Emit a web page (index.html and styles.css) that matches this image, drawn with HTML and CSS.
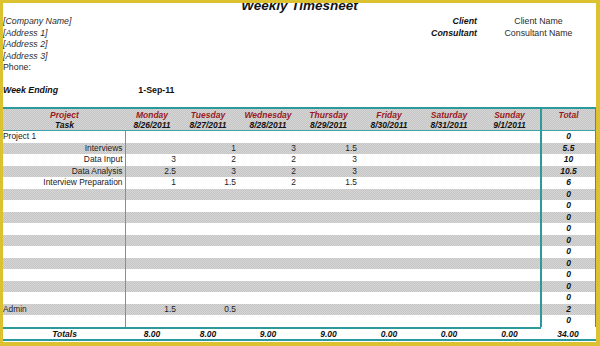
FILE: index.html
```html
<!DOCTYPE html>
<html>
<head>
<meta charset="utf-8">
<link rel="stylesheet" href="styles.css">
</head>
<body>
<div class="sheet">
  <div class="title">Weekly Timesheet</div>
  <div class="info">
    <div class="irow"><span class="c1 it">[Company Name]</span><span class="lbl">Client</span><span class="val">Client Name</span></div>
    <div class="irow"><span class="c1 it">[Address 1]</span><span class="lbl">Consultant</span><span class="val">Consultant Name</span></div>
    <div class="irow"><span class="c1 it">[Address 2]</span></div>
    <div class="irow"><span class="c1 it">[Address 3]</span></div>
    <div class="irow"><span class="c1">Phone:</span></div>
    <div class="irow"></div>
    <div class="irow"><span class="c1 bi">Week Ending</span><span class="wk">1-Sep-11</span></div>
    <div class="irow last"></div>
  </div>

  <div class="grid head">
    <div class="hc"><span class="red">Project</span><span>Task</span></div>
    <div class="hc"><span class="red">Monday</span><span>8/26/2011</span></div>
    <div class="hc"><span class="red">Tuesday</span><span>8/27/2011</span></div>
    <div class="hc"><span class="red">Wednesday</span><span>8/28/2011</span></div>
    <div class="hc"><span class="red">Thursday</span><span>8/29/2011</span></div>
    <div class="hc"><span class="red">Friday</span><span>8/30/2011</span></div>
    <div class="hc"><span class="red">Saturday</span><span>8/31/2011</span></div>
    <div class="hc"><span class="red">Sunday</span><span>9/1/2011</span></div>
    <div class="hc tot"><span class="red">Total</span></div>
  </div>

  <div class="body">
    <div class="grid row"><div class="task left">Project 1</div><div></div><div></div><div></div><div></div><div></div><div></div><div></div><div class="tot">0</div></div>
    <div class="grid row"><div class="task">Interviews</div><div></div><div>1</div><div>3</div><div>1.5</div><div></div><div></div><div></div><div class="tot">5.5</div></div>
    <div class="grid row"><div class="task">Data Input</div><div>3</div><div>2</div><div>2</div><div>3</div><div></div><div></div><div></div><div class="tot">10</div></div>
    <div class="grid row"><div class="task">Data Analysis</div><div>2.5</div><div>3</div><div>2</div><div>3</div><div></div><div></div><div></div><div class="tot">10.5</div></div>
    <div class="grid row"><div class="task">Interview Preparation</div><div>1</div><div>1.5</div><div>2</div><div>1.5</div><div></div><div></div><div></div><div class="tot">6</div></div>
    <div class="grid row"><div class="task"></div><div></div><div></div><div></div><div></div><div></div><div></div><div></div><div class="tot">0</div></div>
    <div class="grid row"><div class="task"></div><div></div><div></div><div></div><div></div><div></div><div></div><div></div><div class="tot">0</div></div>
    <div class="grid row"><div class="task"></div><div></div><div></div><div></div><div></div><div></div><div></div><div></div><div class="tot">0</div></div>
    <div class="grid row"><div class="task"></div><div></div><div></div><div></div><div></div><div></div><div></div><div></div><div class="tot">0</div></div>
    <div class="grid row"><div class="task"></div><div></div><div></div><div></div><div></div><div></div><div></div><div></div><div class="tot">0</div></div>
    <div class="grid row"><div class="task"></div><div></div><div></div><div></div><div></div><div></div><div></div><div></div><div class="tot">0</div></div>
    <div class="grid row"><div class="task"></div><div></div><div></div><div></div><div></div><div></div><div></div><div></div><div class="tot">0</div></div>
    <div class="grid row"><div class="task"></div><div></div><div></div><div></div><div></div><div></div><div></div><div></div><div class="tot">0</div></div>
    <div class="grid row"><div class="task"></div><div></div><div></div><div></div><div></div><div></div><div></div><div></div><div class="tot">0</div></div>
    <div class="grid row"><div class="task"></div><div></div><div></div><div></div><div></div><div></div><div></div><div></div><div class="tot">0</div></div>
    <div class="grid row"><div class="task left">Admin</div><div>1.5</div><div>0.5</div><div></div><div></div><div></div><div></div><div></div><div class="tot">2</div></div>
    <div class="grid row"><div class="task"></div><div></div><div></div><div></div><div></div><div></div><div></div><div></div><div class="tot">0</div></div>
  </div>
  <div class="rule-part"></div>

  <div class="grid totals">
    <div>Totals</div><div>8.00</div><div>8.00</div><div>9.00</div><div>9.00</div><div>0.00</div><div>0.00</div><div>0.00</div><div>34.00</div>
  </div>
  <div class="rule-full"></div>
</div>
</body>
</html>
```

FILE: styles.css
```css
html, body {
  margin: 0;
  padding: 0;
  background: #ffffff;
}

body {
  width: 600px;
  height: 346px;
  overflow: hidden;
  font-family: "Liberation Sans", Arial, sans-serif;
  font-size: 8.8px;
  color: #1e1e1e;
}

.sheet {
  width: 593px;
  height: 339px;
  border-style: solid;
  border-color: #dcc230;
  border-width: 3px 4px 4px 3px;
  overflow: hidden;
  background: #ffffff;
}

.title {
  height: 13px;
  line-height: 6px;
  text-align: center;
  font-size: 13.5px;
  font-weight: bold;
  font-style: italic;
  color: #111;
}

.grid,
.irow {
  display: grid;
  grid-template-columns: 123px 52px 60px 60px 61px 60px 60px 61px 56px;
}

.irow {
  height: 11.5px;
  line-height: 11.5px;
  white-space: nowrap;
}

.irow.last {
  height: 10.5px;
}

.c1 {
  grid-column: 1;
  color: #2b2b2b;
}

.it {
  font-style: italic;
}

.bi {
  font-weight: bold;
  font-style: italic;
  color: #111;
}

.lbl {
  grid-column: 7;
  text-align: right;
  padding-right: 2px;
  font-weight: bold;
  font-style: italic;
  color: #111;
}

.val {
  grid-column: 8 / span 2;
  text-align: center;
  color: #2b2b2b;
  padding-left: 2px;
}

.wk {
  grid-column: 2;
  text-align: right;
  padding-right: 3.5px;
  font-weight: bold;
  color: #111;
}

.head {
  border-top: 2px solid #2c9a9c;
  border-bottom: 1px solid #3aa3a6;
  background: repeating-conic-gradient(#c5c5c5 0% 25%, #d6d6d6 0% 50%) 0 0 / 2px 2px;
  height: 21px;
}

.hc {
  display: flex;
  flex-direction: column;
  align-items: center;
  padding-top: 1px;
  font-size: 8.5px;
  line-height: 10px;
  font-weight: bold;
  font-style: italic;
  color: #111;
  white-space: nowrap;
}

.hc.tot {
  border-left: 2px solid #2c9a9c;
  border-right: 1.5px solid #2c9a9c;
}

.red {
  color: #9a1a22;
}

.row {
  height: 11.5px;
  line-height: 11.5px;
  white-space: nowrap;
  font-size: 8.4px;
}

.row:nth-child(even) {
  background: repeating-conic-gradient(#c5c5c5 0% 25%, #d6d6d6 0% 50%) 0 0 / 2px 2px;
}

.row > div {
  text-align: right;
  padding-right: 2px;
  box-sizing: border-box;
  color: #222;
}

.row > .task {
  border-right: 1px solid #4aa9ad;
  padding-right: 2.5px;
}

.row > .task.left {
  text-align: left;
  padding-left: 0;
}

.row > .tot {
  text-align: center;
  padding-right: 0;
  border-left: 2px solid #2c9a9c;
  border-right: 1.5px solid #2c9a9c;
  font-size: 8.5px;
  font-weight: bold;
  font-style: italic;
  color: #111;
}

.rule-part {
  height: 2px;
  margin-right: 55px;
  background: #2c9a9c;
}

.totals {
  height: 10.5px;
  line-height: 10.5px;
  font-size: 8.5px;
  font-weight: bold;
  font-style: italic;
  color: #111;
}

.totals > div {
  text-align: center;
}

.rule-full {
  height: 2px;
  background: #2c9a9c;
}
```
